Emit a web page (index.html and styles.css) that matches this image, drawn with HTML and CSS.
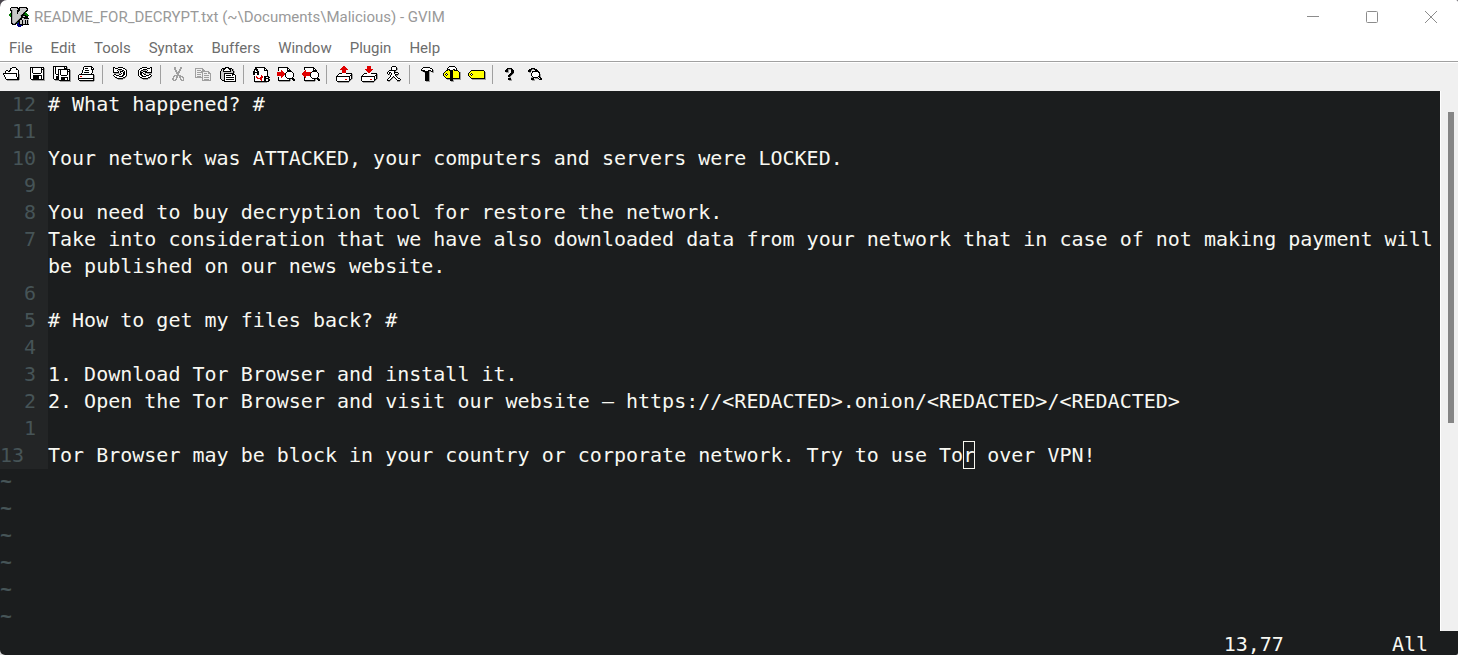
FILE: index.html
```html
<!DOCTYPE html>
<html lang="en">
  <head>
    <meta charset="UTF-8" />
    <meta name="viewport" content="width=device-width, initial-scale=1.0" />
    <title>README_FOR_DECRYPT.txt - GVIM</title>
    <link rel="stylesheet" href="styles.css">
    <script src="icons.js" defer></script>
  </head>
  <body>
    <div class="window">
      <header class="titlebar">
        <span class="logo" data-icon="vim"></span>
        <h1 class="title">README_FOR_DECRYPT.txt (~\Documents\Malicious) - GVIM</h1>
        <div class="caption">
          <button type="button" aria-label="Minimize">
            <svg width="12" height="12" viewBox="0 0 12 12"><path d="M0 5.5h12" /></svg>
          </button>
          <button type="button" aria-label="Maximize">
            <svg width="12" height="12" viewBox="0 0 12 12"><rect x="0.5" y="0.5" width="11" height="11" rx="1" /></svg>
          </button>
          <button type="button" aria-label="Close">
            <svg width="12" height="12" viewBox="0 0 12 12"><path d="M0 0l12 12M12 0L0 12" /></svg>
          </button>
        </div>
      </header>

      <nav class="menubar">
        <button type="button">File</button>
        <button type="button">Edit</button>
        <button type="button">Tools</button>
        <button type="button">Syntax</button>
        <button type="button">Buffers</button>
        <button type="button">Window</button>
        <button type="button">Plugin</button>
        <button type="button">Help</button>
      </nav>

      <div class="toolbar">
        <button type="button" aria-label="Open file" data-icon="open"></button>
        <button type="button" aria-label="Save file" data-icon="save"></button>
        <button type="button" aria-label="Save all files" data-icon="saveall"></button>
        <button type="button" aria-label="Print" data-icon="print"></button>
        <span class="sep"></span>
        <button type="button" aria-label="Undo" data-icon="undo"></button>
        <button type="button" aria-label="Redo" data-icon="redo"></button>
        <span class="sep"></span>
        <button type="button" aria-label="Cut" data-icon="cut"></button>
        <button type="button" aria-label="Copy" data-icon="copy"></button>
        <button type="button" aria-label="Paste" data-icon="paste"></button>
        <span class="sep"></span>
        <button type="button" aria-label="Find and replace" data-icon="replace"></button>
        <button type="button" aria-label="Find next" data-icon="findnext"></button>
        <button type="button" aria-label="Find previous" data-icon="findprev"></button>
        <span class="sep"></span>
        <button type="button" aria-label="Load session" data-icon="load"></button>
        <button type="button" aria-label="Save session" data-icon="store"></button>
        <button type="button" aria-label="Run script" data-icon="run"></button>
        <span class="sep"></span>
        <button type="button" aria-label="Make" data-icon="make"></button>
        <button type="button" aria-label="Build tags" data-icon="tags"></button>
        <button type="button" aria-label="Jump to tag" data-icon="jump"></button>
        <span class="sep"></span>
        <button type="button" aria-label="Help" data-icon="help"></button>
        <button type="button" aria-label="Find help" data-icon="findhelp"></button>
      </div>

      <main class="editor">
        <div class="buffer">
          <div class="line"><span class="nr">12</span><span class="text"># What happened? #</span></div>
          <div class="line"><span class="nr">11</span><span class="text"></span></div>
          <div class="line"><span class="nr">10</span><span class="text">Your network was ATTACKED, your computers and servers were LOCKED.</span></div>
          <div class="line"><span class="nr">9</span><span class="text"></span></div>
          <div class="line"><span class="nr">8</span><span class="text">You need to buy decryption tool for restore the network.</span></div>
          <div class="line"><span class="nr">7</span><span class="text">Take into consideration that we have also downloaded data from your network that in case of not making payment will be published on our news website.</span></div>
          <div class="line"><span class="nr">6</span><span class="text"></span></div>
          <div class="line"><span class="nr">5</span><span class="text"># How to get my files back? #</span></div>
          <div class="line"><span class="nr">4</span><span class="text"></span></div>
          <div class="line"><span class="nr">3</span><span class="text">1. Download Tor Browser and install it.</span></div>
          <div class="line"><span class="nr">2</span><span class="text">2. Open the Tor Browser and visit our website – https://&lt;REDACTED&gt;.onion/&lt;REDACTED&gt;/&lt;REDACTED&gt;</span></div>
          <div class="line"><span class="nr">1</span><span class="text"></span></div>
          <div class="line current"><span class="nr">13</span><span class="text">Tor Browser may be block in your country or corporate network. Try to use To<span class="cursor">r</span> over VPN!</span></div>
          <div class="filler">~</div>
          <div class="filler">~</div>
          <div class="filler">~</div>
          <div class="filler">~</div>
          <div class="filler">~</div>
          <div class="filler">~</div>
        </div>
        <div class="scrollbar"><div class="thumb"></div></div>
      </main>

      <footer class="ruler">
        <span>13,77</span>
        <span>All</span>
      </footer>
    </div>
  </body>
</html>
```
FILE: styles.css
```css
* {
  box-sizing: border-box;
}

body {
  margin: 0;
  background: linear-gradient(#4a464e, #d8d8d8);
}

button {
  margin: 0;
  padding: 0;
  border: 0;
  background: none;
  font: inherit;
  color: inherit;
}

.window {
  display: flex;
  flex-direction: column;
  height: 100vh;
  overflow: hidden;
  border-radius: 7px 2px 2px 5px;
  background: #fff;
  font-family: Roboto, "Open Sans", sans-serif;
  font-size: 15px;
}

/* title bar */
.titlebar {
  display: flex;
  align-items: center;
  flex: none;
  height: 34px;
  padding-left: 9px;
}
.logo {
  width: 20px;
  height: 20px;
  margin-right: 5px;
}
.title {
  flex: 1;
  margin: 0;
  font-size: 15px;
  font-weight: 400;
  color: #999;
}
.caption {
  display: flex;
  gap: 5px;
}
.caption button {
  display: flex;
  justify-content: center;
  align-items: center;
  width: 54px;
  height: 34px;
}
.caption path,
.caption rect {
  fill: none;
  stroke: #8c8c8c;
}

/* menu */
.menubar {
  display: flex;
  flex: none;
  gap: 18px;
  height: 29px;
  padding: 0 9px;
  border-bottom: 1px solid #fff;
  box-shadow: inset 0 -1px #a0a0a0;
  color: #6d6d6d;
}

/* toolbar */
.toolbar {
  display: flex;
  flex: none;
  height: 28px;
  padding-top: 2px;
  background: #f0f0f0;
}
.toolbar button {
  width: 25px;
  height: 20px;
  padding: 1px 3px;
}
.sep {
  width: 8px;
  height: 19px;
  padding-left: 2px;
}
.sep::before {
  content: "";
  display: block;
  width: 1px;
  height: 100%;
  background: #a0a0a0;
}
svg {
  display: block;
}

/* text area */
.editor,
.ruler {
  background: #1b1d1e;
  color: #f8f8f2;
  font-family: "DejaVu Sans Mono", monospace;
  font-size: 20px;
  line-height: 27px;
}
.editor {
  display: flex;
  flex: 1;
  min-height: 0;
}
.buffer {
  flex: 1;
  min-width: 0;
  overflow: hidden;
}
.line {
  display: flex;
  min-height: 27px;
}
.nr {
  flex: none;
  width: 48px;
  padding-right: 12px;
  background: #232526;
  color: #465457;
  text-align: right;
}
.current .nr {
  text-align: left;
}
.text {
  flex: 1;
}
.cursor {
  padding: 2px 0;
  outline: 1px solid #f8f8f0;
  outline-offset: -1px;
}
.filler {
  height: 27px;
  color: #465457;
  font-family: "Liberation Mono", monospace;
  font-weight: 700;
}

.scrollbar {
  flex: none;
  width: 18px;
  padding: 21px 4px 0 7px;
  border-left: 1px solid #fff;
  background: #f0f0f0;
}
.thumb {
  width: 6px;
  height: 60%;
  background: #858585;
}

.ruler {
  display: flex;
  flex: none;
  justify-content: flex-end;
  gap: 108px;
  height: 24px;
  padding-right: 30px;
}
```
FILE: icons.js
```js
// k black, w white, g shadow, G disabled, l light grey, r red, y yellow, n green, b blue
const colors = {
  k: "#000", w: "#fff", g: "#a0a0a0", G: "#a0a0a0", l: "#c8c8c8",
  r: "#e00000", y: "#ffff00", n: "#007a00", b: "#000080"
};

// x, y: where the drawing starts inside the 18px box
const icons = {
  vim: { x: 0, y: 0, size: 20, rows: [
    "..kkkkkkk.kkkkkkkk..",
    ".kllllllkkkllllllkk.",
    ".klllllllkklllllllk.",
    ".kkgllllkkkllllllkk.",
    "..kgllllkkllllllkk..",
    "..kgllllklllllgkn...",
    ".nkgllllklllllkknn..",
    "nnkgllllllllgkknnnn.",
    "nnkglllllllgkkkkknnn",
    ".nkgllllllllkkllkkk.",
    "..kglllllllgkkkkkkk.",
    "..kgllllllgkkllkkkkk",
    "..kglllllgkkklllllll",
    "..kgllllgkkllkllklkl",
    "..kglllgkkkllkllklkl",
    "..kgllgknbkllkllklkl",
    "..kkggkkbbkllkllklkl",
    "...kkkk.bbkkkkkkkkkk",
    "........bbbbbk......",
    ".........bbb........"
  ] },
  open: { x: 0, y: 1, rows: [
    ".........kkkk.....",
    ".......kkwwwwk....",
    ".......kwwwwwkk...",
    "...kk.kkwwwwwwwk..",
    "..kwwkkwwwwwwwwk..",
    "..kwwwwwwwwwwwwk..",
    "kkkkkkkkkkkkkkwk..",
    "kwwwwwwwwwwwwkwkg.",
    ".kwwwwwwwwwwwkwkg.",
    ".kwwwwwwwwwwwkwkg.",
    "..kwwwwwwwwwwwkkg.",
    "..kwwwwwwwwwwwkkg.",
    "...kkkkkkkkkkkkkg.",
    "....gggggggggggg.."
  ] },
  save: { x: 2, y: 1, rows: [
    "kkkkkkkkkkkkkk.",
    "kwkwwwwwwwwkwkg",
    "kwkwwwwwwwwkkkg",
    "kwkwwwwwwwwkwkg",
    "kwkwwwwwwwwkwkg",
    "kwkwwwwwwwwkwkg",
    "kwwkkkkkkkkwwkg",
    "kwwwwwwwwwwwwkg",
    "kwwkkkkkkkkkwkg",
    "kwwkkkkkkwwkwkg",
    "kwwkkkkkkwwkwkg",
    "kwwkkkkkkwwkwkg",
    ".kkkkkkkkkkkkkg",
    "..ggggggggggggg"
  ] },
  saveall: { x: 0, y: 0, rows: [
    "kkkkkkkkkkkkkk....",
    "kwkwwwwwwwwkwkg...",
    "kwkwwwwwwwwkkkg...",
    "kwkwwkkkkkkkkkkkk.",
    "kwkwwkwkwwwwwwkwkg",
    "kwkwwkwkwwwwwwkkkg",
    "kwkwwkwkwwwwwwkwkg",
    "kwkwwkwkwwwwwwkwkg",
    "kwwkkkwkwwwwwwkwkg",
    "kwwwwkwwkkkkkkwwkg",
    "kwwkkkwwwwwwwwwwkg",
    "kwwkkkwwkkkkkkkwkg",
    "kwwkkkwwkkkkwwkwkg",
    ".kkkkkwwkkkkwwkwkg",
    "..ggggkkkkkkkkkkkg",
    ".......ggggggggggg"
  ] },
  print: { x: 0, y: 0, rows: [
    "......kkkkkkkk....",
    ".....kwwwwwwwkk...",
    ".....kwkkkwwwkwk..",
    ".....kwwwwwwwkkk..",
    "....kwwkkkkwwwk...",
    "....kwwwwwwwwwk...",
    "....kwkkkkkwwwk...",
    "...kwwwwwwwwwk....",
    ".kkkkkkkkkkkkkkk..",
    "kwwwwwwwwwwwwwwkg.",
    "kwrrwwwwwwwwwwwkg.",
    "kwwwwwwwwwwwwwwkg.",
    "kkkkkkkkkkkkkkkkg.",
    "kwwwwwwwwwwwwwwkg.",
    ".kkkkkkkkkkkkkkkg.",
    "..gggggggggggggg.."
  ] },
  undo: { x: 2, y: 1, rows: [
    "kk...kkkkk....",
    "kwkkkwwwwwkk..",
    "kwwwwkkkkwwwkg",
    "kwwwk.gg.kkwwk",
    "kwwwwk.kkk.kwk",
    "kkkkkk.kwwkkwk",
    ".gggggg.kwkkwk",
    ".kk...kkwwkkwk",
    "kwwkkkwwwkkwwk",
    ".kwwwwkkkkwwkg",
    "..kkwwwwwwkkg.",
    "...gkkkkkkgg..",
    ".....ggggg...."
  ] },
  redo: { x: 2, y: 1, rows: [
    "....kkkkk...kk",
    "..kkwwwwwkkkwk",
    ".kwwwkkkkwwwwk",
    "kwwkkggg.kwwwk",
    "kwkg.kkkkwwwwk",
    "kwkkkwwkkkkkkk",
    "kwkkwkgg.ggggg",
    "kwkkwwkk...kk.",
    "kwwkkwwwkkkwwk",
    ".kwwkkkkwwwwkg",
    "..kkwwwwwwkkg.",
    "...gkkkkkkgg..",
    ".....ggggg...."
  ] },
  cut: { x: 3, y: 1, rows: [
    "..GG....GG..",
    "..GG....GG..",
    "..GG...GG...",
    "...GG..GG...",
    "...GG.GG....",
    "....GGGG....",
    "....GGG.....",
    ".....GG.....",
    "..GGGGGGG...",
    ".GG.GG.GGGG.",
    ".G..GG.GG.GG",
    "GG..G...G..G",
    "GG.GG...GG.G",
    ".GGG.....GGG"
  ] },
  copy: { x: 1, y: 2, rows: [
    "GGGGGGGG........",
    "G......GG.......",
    "G.GGGG.GGG......",
    "G.....GGGGGGGG..",
    "G.GGGGGG.....GG.",
    "G......G.GGG.GGG",
    "G.GGGG.G.......G",
    "G......G.GGGGG.G",
    "G.GGGG.G.......G",
    "GGGGGGGG.GGGGG.G",
    ".......G.......G",
    ".......G.GGGGG.G",
    ".......GGGGGGGGG"
  ] },
  paste: { x: 1, y: 1, rows: [
    ".....kkkk.......",
    "..kkkkwwkkkk....",
    ".klkkwwwwkklkg..",
    ".klkwwwwwwklkg..",
    "kllkkkkkkkkllkg.",
    "kllllllllllllkg.",
    "klllkkkkkkkkkk..",
    "klllkwwwwwwwkkk.",
    "klllkwkkkkkwkwwk",
    "klllkwwwwwwwwwwk",
    "klllkwkkkkkkkkwk",
    "klllkwwwwwwwwwwk",
    ".kllkwkkkkkkkkwk",
    "..kkkwwwwwwwwwwk",
    "....kkkkkkkkkkkk"
  ] },
  replace: { x: 1, y: 1, rows: [
    "..kkkkkkkkkk.....",
    "..kkwwwwwwwkk....",
    ".kkkkwwwwwwkwk...",
    ".kwkkwwwwwwkkkk..",
    "kkwwkkwwwwwwwwk..",
    "kkkkkkwwwwwwwwk..",
    "kkwwkkwwwwwwwwk..",
    "kkwwkkwwwwwwwwk..",
    ".wwwwwwwrwwwwwk..",
    ".kwrwwwwrrwkkkkk.",
    ".kwrrwwrrrwkkwwkk",
    ".kwwrrrrrwwkkkkk.",
    ".kwwwwwrrwwkkwwkk",
    ".kwwwwwwrwwkkwwkk",
    ".kkkkkkkkkkkkkkk.",
    "..gggggggggggg..."
  ] },
  findnext: { x: 0, y: 1, rows: [
    ".kkkkkkkkkk.......",
    ".kwwwwwwwwkk......",
    ".kwwwwwwwwkwk.....",
    ".kwwrwwwwwkkkk....",
    "....rrwwwwkkkkk...",
    "rrrrrrrwwkwwwwwk..",
    "rrrrrrrrkwwwwwwwk.",
    "rrrrrrrrkwwwwwwwk.",
    "rrrrrrrwkwwwwwwwk.",
    "....rrwwkwwwwwwwk.",
    ".kwwrwwwwkwwwwwk..",
    ".kwwwwwwwwkkkkkkk.",
    ".kwwwwwwwwwwkg.kkk",
    ".kkkkkkkkkkkkg..kk",
    "..ggggggggggg....."
  ] },
  findprev: { x: 0, y: 1, rows: [
    "..kkkkkkkkkk......",
    "..kwwwwwwwwkk.....",
    "..kwwwwwwwwkwk....",
    "...rwwwwwwwkkkk...",
    "..rrwwwwwwkkkkk...",
    ".rrrrrrrrkwwwwwk..",
    "rrrrrrrrkwwwwwwwk.",
    "rrrrrrrrkwwwwwwwk.",
    ".rrrrrrrkwwwwwwwk.",
    "..rrwwwwkwwwwwwwk.",
    "..krwwwwwkwwwwwk..",
    "..kwwwwwwwkkkkkkk.",
    "..kwwwwwwwwwkg.kkk",
    "..kkkkkkkkkkkg..kk",
    "...gggggggggg....."
  ] },
  load: { x: 1, y: 0, rows: [
    ".......rr........",
    "......rrrr.......",
    ".....rrrrrr......",
    "....rrrrrrrr.....",
    "......rrrr.......",
    "......rrrr.......",
    "......rrrr.......",
    "...kkkwwwwkkkkkk.",
    "..kwwwwwwwwwwwwkg",
    ".kwwwwwwwwwwwwkkg",
    "kkkkkkkkkkkkkkwkg",
    "kwwwwwwwwwwwwkwkg",
    "kwwwwwwwwwwwwkwkg",
    "kwwwwwwwwrrwwkkg.",
    "kwwwwwwwwwwwwkg..",
    ".kkkkkkkkkkkkg...",
    "..ggggggggggg...."
  ] },
  store: { x: 1, y: 0, rows: [
    "......rrrr.......",
    "......rrrr.......",
    "......rrrr.......",
    "....rrrrrrrr.....",
    ".....rrrrrr......",
    "......rrrr.......",
    ".......rr........",
    "...kkkwwwwkkkkkk.",
    "..kwwwwwwwwwwwwkg",
    ".kwwwwwwwwwwwwkkg",
    "kkkkkkkkkkkkkkwkg",
    "kwwwwwwwwwwwwkwkg",
    "kwwwwwwwwwwwwkwkg",
    "kwwwwwwwwrrwwkkg.",
    "kwwwwwwwwwwwwkg..",
    ".kkkkkkkkkkkkg...",
    "..ggggggggggg...."
  ] },
  run: { x: 2, y: 0, rows: [
    ".....kkkk.....",
    "....kwwwwk....",
    "....kwwwwkg...",
    "....kwwwwkg...",
    "..kkkkkkkg....",
    ".kwwwwwkg.....",
    "kwkkwwwkkkk...",
    "kwk.kwwkwwwk..",
    ".kg.kwwwkkkg..",
    "...kwwwwkgg...",
    "...kwwkwwk....",
    "..kwwkgkwwk...",
    ".kwwkg..kwwkk.",
    "kwwkg....kwwwk",
    "kkkg......kkkg",
    ".gg.......ggg."
  ] },
  make: { x: 3, y: 1, rows: [
    "..kkkkkkk....",
    ".kwwwwwwwkk..",
    "kwwwwwwwwwwk.",
    "kkkkwwwkkkwkg",
    ".gkkkkkkggkkg",
    "...gkkkkg..gg",
    "....kkkkg....",
    "....kkkkg....",
    "....kkkkg....",
    "....kkkkg....",
    "....kkkkg....",
    "....kkkkg....",
    "....kkkkg....",
    "....kkkkg....",
    ".....gggg...."
  ] },
  tags: { x: 0, y: 0, rows: [
    "......kkkkkk......",
    ".....kwwwwwwk.....",
    "....kwwwwwwwwk....",
    "....kkkwwwkkwk....",
    "...kkykkkkykkkk...",
    "..kyyyykkkyyyyyk..",
    ".kyyyyykkkyyyyyykg",
    "kyykyyykkkyyyyyykg",
    "kykwkyykkkyyyyyykg",
    "kyykyyykkkyyyyyykg",
    ".kyyyyykkkyyyyyykg",
    "..kyyyykkkyyyyyykg",
    "...kkkkkkkkkkkkkkg",
    "....gggkkkgggggggg",
    ".......kkkg.......",
    "........ggg......."
  ] },
  jump: { x: 0, y: 4, rows: [
    "...kkkkkkkkkkkkk..",
    "..kyyyyyyyyyyyyyk.",
    ".kyyyyyyyyyyyyyykg",
    "kyykyyyyyyyyyyyykg",
    "kykwkyyyyyyyyyyykg",
    "kyykyyyyyyyyyyyykg",
    ".kyyyyyyyyyyyyyykg",
    "..kyyyyyyyyyyyyykg",
    "...kkkkkkkkkkkkkkg",
    "....gggggggggggggg"
  ] },
  help: { x: 4, y: 2, rows: [
    "..kkkkk..",
    ".kkgggkk.",
    "kkkg..kkk",
    "kkkg..kkk",
    ".ggg..kkk",
    ".....kkkg",
    "....kkkg.",
    "...kkkg..",
    "...kkg...",
    "....gg...",
    "...kkk...",
    "...kkkg..",
    "....ggg.."
  ] },
  findhelp: { x: 2, y: 2, rows: [
    "...kkkk.......",
    ".kkkggkkk.....",
    "kkkg...kkk....",
    "kkk.kkkkkkk...",
    ".gg.kwwwwwkk..",
    "...kwwwwwwwk..",
    "...kwwwwwwwkg.",
    "...kwwwwwwwkg.",
    "....kwwwwwkkg.",
    "...ggkkkkkwkk.",
    "...kkk.gggkwkk",
    "...kkkg....kkk",
    "....ggg......."
  ] }
};

function drawIcon(icon) {
  const size = icon.size || 18;
  const paths = {};
  icon.rows.forEach((row, y) => {
    for (let x = 0; x < row.length; x++) {
      const c = row[x];
      if (c == ".") continue;
      paths[c] = (paths[c] || "") + "M" + (icon.x + x) + " " + (icon.y + y) + "h1v1h-1z";
    }
  });
  let svg = '<svg width="' + size + '" height="' + size + '" shape-rendering="crispEdges">';
  for (const c in paths) {
    svg += '<path fill="' + colors[c] + '" d="' + paths[c] + '"/>';
  }
  return svg + "</svg>";
}

document.querySelectorAll("[data-icon]").forEach((el) => {
  el.innerHTML = drawIcon(icons[el.dataset.icon]);
});
```
